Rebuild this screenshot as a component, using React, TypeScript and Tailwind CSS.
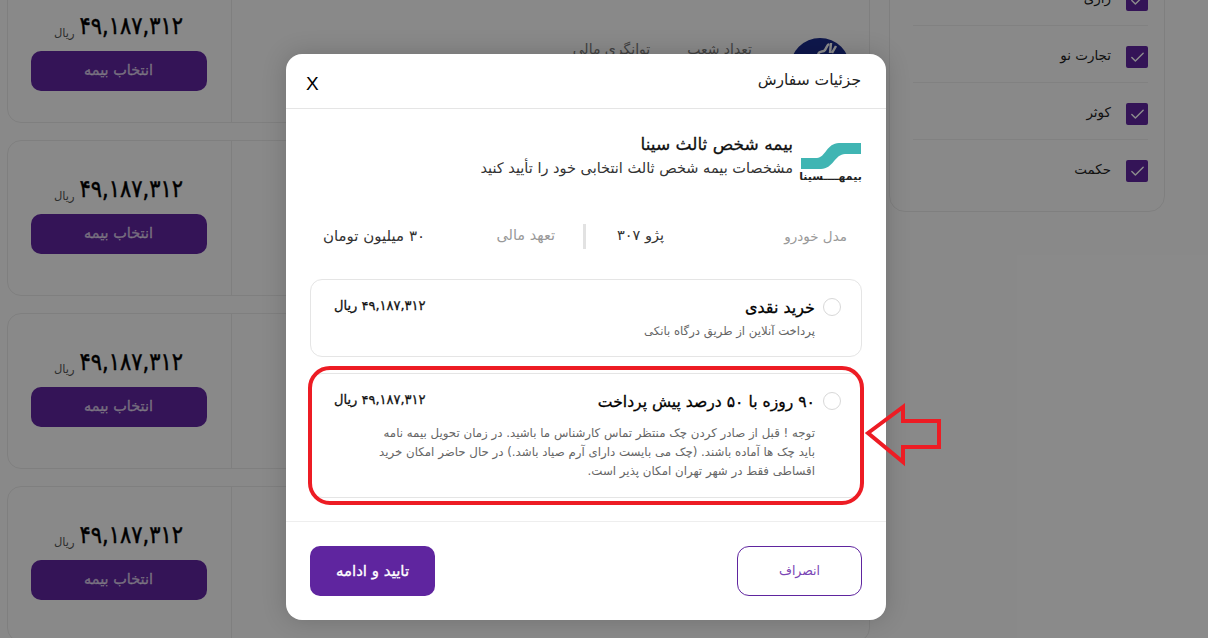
import { Check } from "lucide-react";

const font = { fontFamily: '"DejaVu Sans", sans-serif' };

function BgCard({ first }: { first?: boolean }) {
  return (
    <div className={`${first ? "h-[146px]" : "h-[156px]"} shrink-0 flex rounded-[14px] border border-[#e8e8e8] bg-[#fafafa]`}>
      <div className="flex-1 relative flex items-start justify-start pr-[19px] pt-[60px]">
        <svg width="60" height="60" viewBox="0 0 60 60" className="ml-[38px]">
          <circle cx="30" cy="30" r="30" fill="#1a2a8a" />
          <path d="M28 16c2-4 5-1 7-4s2-5 4-6M41 5l-1 10M46 8l-4 7" stroke="#fff" strokeWidth="2.5" fill="none" />
        </svg>
        <span className="text-[14px] text-[#777] ml-[37px] mt-[1px]">تعداد شعب</span>
        <span className="text-[14px] text-[#777] mt-[1px]">توانگری مالی</span>
      </div>
      <div className="w-[224px] border-r border-[#e8e8e8] flex flex-col items-center pt-[31px] pr-[2px]">
        <div className="flex items-end gap-[5px] h-[34px] mb-[8px]">
          <span className="inline-block scale-y-[1.15] text-[21px] leading-[34px] text-black [-webkit-text-stroke:0.4px]">۴۹,۱۸۷,۳۱۲</span>
          <span className="text-[11.5px] leading-[20px] text-[#555]">ریال</span>
        </div>
        <button className="w-[176px] h-[40px] rounded-[10px] bg-[#5f259f] text-white/70 text-[14.5px] [-webkit-text-stroke:0.3px]">انتخاب بیمه</button>
      </div>
    </div>
  );
}

function SideRow({ label, last }: { label: string; last?: boolean }) {
  return (
    <div className={`h-[57px] flex items-start gap-[15px] pt-[20px] ${last ? "" : "border-b border-[#ececec]"}`}>
      <span className="w-[22px] h-[22px] rounded-[2px] bg-[#5f259f] flex items-center justify-center">
        <Check size={17} color="#fff" strokeWidth={2} />
      </span>
      <span className="text-[13.5px] leading-[20px] text-[#222] -mt-[1px]">{label}</span>
    </div>
  );
}

export default function App() {
  return (
    <div dir="rtl" style={font} className="relative w-[1208px] h-[638px] overflow-hidden bg-[#fafafa]">
      <div className="flex gap-[19px] pr-[43px] pl-[7px]">
        <div className="w-[276px] h-[244px] -mt-[32px] shrink-0 rounded-[16px] border border-[#e8e8e8] bg-[#fafafa] pr-[16px] pl-[23px]">
          <SideRow label="رازی" />
          <SideRow label="تجارت نو" />
          <SideRow label="کوثر" />
          <SideRow label="حکمت" last />
        </div>
        <div className="w-[863px] -mt-[23px] flex flex-col gap-[17px]">
          <BgCard first />
          <BgCard />
          <BgCard />
          <BgCard />
        </div>
      </div>

      <div className="absolute inset-0 bg-black/45" />

      <div className="absolute top-[54px] left-[286px] w-[600px] h-[566px] rounded-[16px] bg-white shadow-[0_0_24px_rgba(0,0,0,0.18)] flex flex-col">
        <div className="h-[55px] shrink-0 flex items-center justify-between border-b border-[#e5e5e5] pr-[25px] pl-[20px]">
          <span className="text-[15.5px] text-[#222]">جزئیات سفارش</span>
          <span className="text-[19px] leading-none text-black mt-[5px]" style={{ fontFamily: '"Liberation Sans", sans-serif' }}>X</span>
        </div>

        <div className="flex-1 px-[24px]">
          <div className="flex items-start gap-[7px] pt-[25px]">
            <div className="w-[61px] shrink-0 flex flex-col items-center mr-[1px]">
              <svg width="60" height="26" viewBox="0 0 60 26" className="mt-[9px]">
                <path d="M0 15 H16 C24 15 26 0 38 0 H60 V11 H44 C34 11 32 26 20 26 H0 Z" fill="#40b5b3" />
              </svg>
              <span className="text-[11px] leading-[15px] font-bold text-[#222] whitespace-nowrap">بیمهــــسینا</span>
            </div>
            <div className="flex flex-col">
              <span className="text-[17px] leading-[20px] text-[#111] [-webkit-text-stroke:0.3px]">بیمه شخص ثالث سینا</span>
              <span className="text-[14.5px] leading-[20px] mt-[4px] text-[#333]">مشخصات بیمه شخص ثالث انتخابی خود را تأیید کنید</span>
            </div>
          </div>

          <div className="flex items-center h-[26px] mt-[39px] text-[14.5px]">
            <span className="w-[198px] pr-[15px] text-[#999] text-[13.5px]">مدل خودرو</span>
            <span className="w-[78px] text-[#333]">پژو ۳۰۷</span>
            <span className="w-[3px] h-[25px] bg-[#e2e2e2] ml-[28px]" />
            <span className="w-[130px] text-[#999]">تعهد مالی</span>
            <span className="text-[#333] text-[15px]">۳۰ میلیون تومان</span>
          </div>

          <div className="mt-[30px] h-[78px] rounded-[12px] border border-[#e5e5e5] pr-[20px] pl-[23px] pt-[18px]">
            <div className="flex items-start gap-[8px]">
              <span className="w-[18px] h-[18px] rounded-full border border-[#d8d8d8] shrink-0" />
              <div className="flex-1">
                <div className="text-[16px] leading-[20px] text-black [-webkit-text-stroke:0.3px]">خرید نقدی</div>
                <div className="text-[11.7px] leading-[18px] mt-[4px] text-[#666]">پرداخت آنلاین از طریق درگاه بانکی</div>
              </div>
              <span className="text-[13px] leading-[18px] text-[#111] -mt-[1px] [-webkit-text-stroke:0.3px]">۴۹,۱۸۷,۳۱۲ ریال</span>
            </div>
          </div>

          <div className="mt-[16px] h-[125px] rounded-[12px] border border-[#e5e5e5] pr-[20px] pl-[23px] pt-[18px]">
            <div className="flex items-start gap-[8px]">
              <span className="w-[18px] h-[18px] rounded-full border border-[#d8d8d8] shrink-0" />
              <div className="flex-1 text-[15.6px] leading-[20px] text-black [-webkit-text-stroke:0.3px]">۹۰ روزه با ۵۰ درصد پیش پرداخت</div>
              <span className="text-[13px] leading-[18px] text-[#111] -mt-[1px] [-webkit-text-stroke:0.3px]">۴۹,۱۸۷,۳۱۲ ریال</span>
            </div>
            <p className="mr-[26px] mt-[12px] w-[448px] text-[11.8px] leading-[19px] text-[#666]">
              توجه ! قبل از صادر کردن چک منتظر تماس کارشناس ما باشید. در زمان تحویل بیمه نامه باید چک ها آماده باشند. (چک می بایست دارای آرم صیاد باشد.) در حال حاضر امکان خرید اقساطی فقط در شهر تهران امکان پذیر است.
            </p>
          </div>
        </div>

        <div className="h-[99px] shrink-0 border-t border-[#eeeeee] flex items-start justify-between px-[24px] pt-[24px]">
          <button className="w-[125px] h-[50px] rounded-[12px] border border-[#5f259f] text-[12.5px] text-[#7a45b5]">انصراف</button>
          <button className="w-[125px] h-[50px] rounded-[10px] bg-[#5f259f] text-white text-[15px] [-webkit-text-stroke:0.3px]">تایید و ادامه</button>
        </div>
      </div>

      <svg className="absolute top-0 left-0 pointer-events-none" width="1208" height="638" viewBox="0 0 1208 638">
        <rect x="310" y="368" width="552" height="135" rx="20" fill="none" stroke="#ed1c24" strokeWidth="4" />
        <path d="M868 433 L903 407 V421 H939 V447 H903 V462 Z" fill="none" stroke="#ed1c24" strokeWidth="4" />
      </svg>
    </div>
  );
}
